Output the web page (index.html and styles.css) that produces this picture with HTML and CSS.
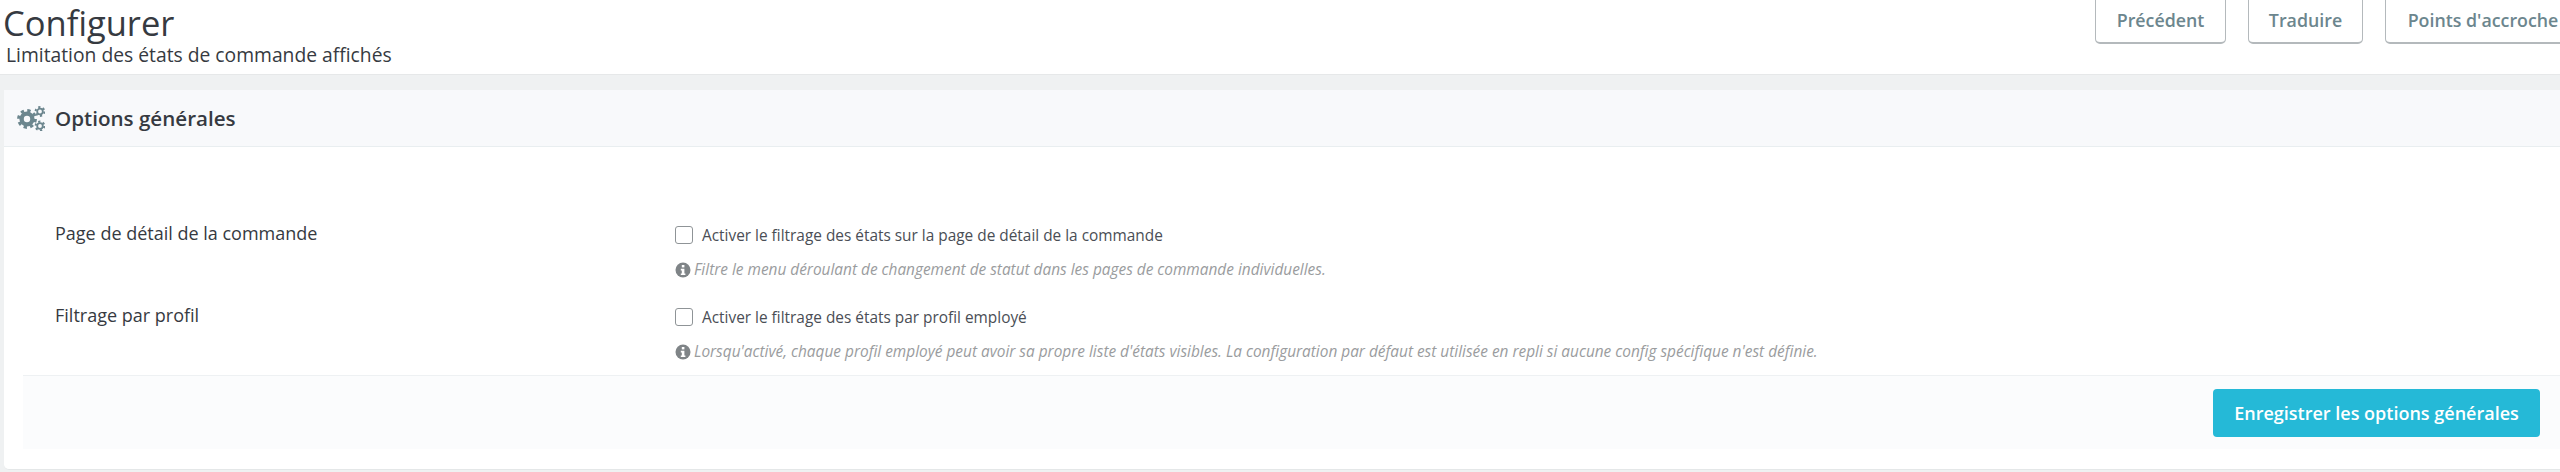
FILE: index.html
```html
<!DOCTYPE html>
<html lang="fr">

<head>
    <meta charset="UTF-8">
    <meta name="viewport" content="width=device-width, initial-scale=1.0">
    <title>Configurer</title>
    <link rel="stylesheet" href="styles.css">
</head>

<body>
    <header class="page-head">
        <div class="page-titles">
            <h1 class="page-title">Configurer</h1>
            <p class="page-subtitle">Limitation des états de commande affichés</p>
        </div>
        <div class="toolbar">
            <a class="tool-btn tool-prev">Précédent</a>
            <a class="tool-btn tool-translate">Traduire</a>
            <a class="tool-btn tool-hooks">Points d'accroche</a>
        </div>
    </header>

    <section class="panel">
        <div class="panel-head">
            <svg class="cogs-icon" viewBox="0 0 28 26" width="28" height="26">
                <g class="cog-big">
                    <circle cx="10" cy="14" r="5.4" />
                    <circle class="cog-teeth" cx="10" cy="14" r="8.4" />
                </g>
                <g class="cog-small">
                    <circle cx="23" cy="6.5" r="2.8" />
                    <circle class="cog-teeth-sm" cx="23" cy="6.5" r="4.4" />
                </g>
                <g class="cog-small">
                    <circle cx="23" cy="21" r="2.8" />
                    <circle class="cog-teeth-sm" cx="23" cy="21" r="4.4" />
                </g>
            </svg>
            <h2 class="panel-title">Options générales</h2>
        </div>

        <div class="panel-body">
            <div class="form-row">
                <div class="row-label">Page de détail de la commande</div>
                <div class="row-field">
                    <label class="check-line"><input type="checkbox" class="check-box"> Activer le filtrage des états sur la page de détail de la commande</label>
                    <p class="help">
                        <svg class="info-icon" viewBox="0 0 16 16" width="16" height="16">
                            <circle cx="8" cy="8" r="7.5" />
                            <rect x="6.8" y="3" width="2.6" height="2.4" />
                            <path d="M5.8 6.8h3.6v4.6h1v1.6H5.8v-1.6h1V8.4h-1z" />
                        </svg>
                        <em>Filtre le menu déroulant de changement de statut dans les pages de commande individuelles.</em>
                    </p>
                </div>
            </div>
            <div class="form-row">
                <div class="row-label">Filtrage par profil</div>
                <div class="row-field">
                    <label class="check-line"><input type="checkbox" class="check-box"> Activer le filtrage des états par profil employé</label>
                    <p class="help">
                        <svg class="info-icon" viewBox="0 0 16 16" width="16" height="16">
                            <circle cx="8" cy="8" r="7.5" />
                            <rect x="6.8" y="3" width="2.6" height="2.4" />
                            <path d="M5.8 6.8h3.6v4.6h1v1.6H5.8v-1.6h1V8.4h-1z" />
                        </svg>
                        <em>Lorsqu'activé, chaque profil employé peut avoir sa propre liste d'états visibles. La configuration par défaut est utilisée en repli si aucune config spécifique n'est définie.</em>
                    </p>
                </div>
            </div>
        </div>

        <div class="panel-foot">
            <button class="save-btn">Enregistrer les options générales</button>
        </div>
    </section>
</body>

</html>
```

FILE: styles.css
```css
* {
    margin: 0;
    padding: 0;
    box-sizing: border-box;
}

html,
body {
    height: 472px;
    overflow: hidden;
}

body {
    background: #eff1f2;
    font-family: "Open Sans", sans-serif;
    color: #363a41;
}

.page-head {
    display: flex;
    justify-content: space-between;
    height: 75px;
    padding-left: 3px;
    background: #fff;
    border-bottom: 1px solid #e6e8e9;
    overflow: hidden;
}

.page-title {
    padding-top: 1px;
    font-size: 34.5px;
    font-weight: 400;
    line-height: 43px;
}

.page-subtitle {
    margin-top: -1px;
    padding-left: 3px;
    font-size: 19.3px;
    line-height: 24px;
}

.toolbar {
    display: flex;
    align-items: flex-end;
    gap: 22px;
    height: 44px;
    margin-right: -21px;
}

.tool-btn {
    display: flex;
    align-items: center;
    justify-content: center;
    height: 64px;
    flex: none;
    padding-top: 16px;
    border: 1px solid #b4b9bc;
    border-bottom-width: 2px;
    border-radius: 5px;
    color: #6c868e;
    font-size: 17.8px;
    font-weight: 600;
}

.tool-prev {
    width: 131px;
}

.tool-translate {
    width: 115px;
}

.tool-hooks {
    width: 196px;
}

.panel {
    display: flex;
    flex-direction: column;
    height: 380px;
    margin: 15px -10px 0 4px;
    background: #fff;
    border-radius: 5px;
    border-bottom: 1px solid #e4e7e8;
}

.panel-head {
    display: flex;
    flex: none;
    align-items: center;
    gap: 10px;
    height: 57px;
    padding-left: 13px;
    background: #f8f9fb;
    border-bottom: 1px solid #e9eef0;
}

.cogs-icon {
    flex: none;
}

.cog-big,
.cog-small {
    fill: none;
    stroke: #6c868e;
}

.cog-big circle:first-child {
    stroke-width: 4.4px;
}

.cog-small circle:first-child {
    stroke-width: 1.8px;
}

.cog-teeth {
    stroke-width: 3px;
    stroke-dasharray: 3.3 3.3;
}

.cog-teeth-sm {
    stroke-width: 2px;
    stroke-dasharray: 2.2 2.4;
}

.panel-title {
    font-size: 20.6px;
    font-weight: 600;
    line-height: 28px;
}

.panel-body {
    display: flex;
    flex: 1;
    flex-direction: column;
    gap: 19px;
    padding-top: 72px;
    padding-left: 51px;
}

.form-row {
    display: flex;
}

.row-label {
    width: 620px;
    font-size: 18px;
    line-height: 28px;
}

.check-line {
    display: flex;
    align-items: center;
    gap: 9px;
    height: 32px;
    font-size: 15.4px;
    color: #4a4e55;
}

.check-box {
    appearance: none;
    width: 18px;
    height: 18px;
    background: #fff;
    border: 1px solid #8f9497;
    border-radius: 3px;
}

.help {
    display: flex;
    align-items: center;
    gap: 3px;
    margin-top: 7px;
    font-size: 15.4px;
    line-height: 24px;
    color: #9a9c9e;
}

.info-icon {
    flex: none;
    fill-rule: evenodd;
}

.info-icon circle {
    fill: #7f8487;
}

.info-icon rect,
.info-icon path {
    fill: #fff;
}

.panel-foot {
    display: flex;
    flex: none;
    justify-content: flex-end;
    align-items: center;
    height: 74px;
    margin-left: 19px;
    margin-bottom: 20px;
    padding-top: 1px;
    padding-right: 30px;
    background: #fbfcfd;
    border-top: 1px solid #eef1f3;
}

.save-btn {
    width: 327px;
    height: 48px;
    background: #25b9d7;
    border: none;
    border-radius: 4px;
    color: #fff;
    font-family: "Open Sans", sans-serif;
    font-size: 18px;
    font-weight: 600;
}
```
